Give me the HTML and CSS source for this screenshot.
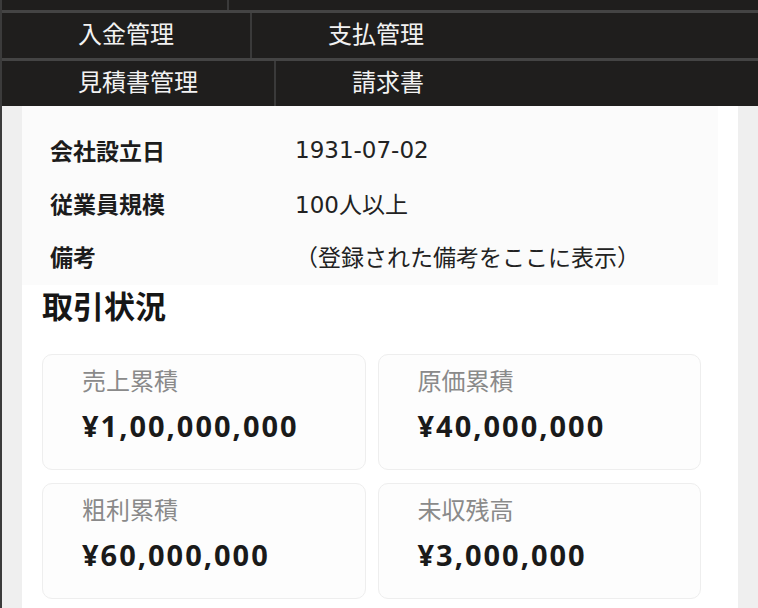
FILE: index.html
```
<!DOCTYPE html>
<html lang="ja">
<head>
<meta charset="utf-8">
<title>取引状況</title>
<link rel="stylesheet" href="styles.css">
</head>
<body>
<div class="app">
  <nav class="topnav">
    <div class="nav-row nav-row-top"><span class="nav-stub"></span></div>
    <div class="nav-row"><a class="nav-cell">入金管理</a><a class="nav-cell">支払管理</a></div>
    <div class="nav-row"><a class="nav-cell">見積書管理</a><a class="nav-cell">請求書</a></div>
  </nav>
  <main class="panel">
    <table class="info">
      <tr class="info-hidden"><th>業種区分</th><td>製造業</td></tr>
      <tr><th>会社設立日</th><td>1931-07-02</td></tr>
      <tr><th>従業員規模</th><td>100人以上</td></tr>
      <tr><th>備考</th><td>（登録された備考をここに表示）</td></tr>
    </table>
    <h2 class="section-title">取引状況</h2>
    <div class="stats">
      <div class="card"><div class="card-label">売上累積</div><div class="card-value">¥1,00,000,000</div></div>
      <div class="card"><div class="card-label">原価累積</div><div class="card-value">¥40,000,000</div></div>
      <div class="card"><div class="card-label">粗利累積</div><div class="card-value">¥60,000,000</div></div>
      <div class="card"><div class="card-label">未収残高</div><div class="card-value">¥3,000,000</div></div>
    </div>
  </main>
</div>
</body>
</html>
```
FILE: styles.css
```
* { box-sizing: border-box; }
html, body { margin: 0; padding: 0; }
body {
  background: #efefef;
  font-family: "DejaVu Sans", "Noto Sans CJK JP", sans-serif;
  color: #1c1c1c;
}
.app {
  border-left: 2px solid #3b3b3b;
  min-height: 100vh;
  padding: 0 20px;
}
.topnav {
  position: fixed;
  top: 0;
  left: 0;
  right: 0;
  background: #1f1e1d;
  border-left: 2px solid #3b3b3b;
  z-index: 10;
}
.nav-row {
  display: flex;
  height: 48px;
  border-top: 3px solid #444444;
}
.nav-row-top {
  height: 10px;
  border-top: none;
}
.nav-stub {
  width: 227px;
  border-right: 2px solid #3a3a3a;
}
.nav-cell {
  display: block;
  padding: 0 76px;
  border-right: 2px solid #3a3a3a;
  font-family: "Noto Sans CJK JP", sans-serif;
  font-size: 24px;
  line-height: 39px;
  color: #f2f2f2;
}
.nav-cell:last-child {
  border-right: none;
}
.panel {
  background: #ffffff;
  padding-top: 73px;
  min-height: 620px;
}
.info {
  width: 696px;
  border-collapse: collapse;
  background: #fbfbfb;
  font-size: 23px;
}
.info th, .info td {
  height: 53px;
  padding: 0 0 6px 0;
  text-align: left;
  vertical-align: middle;
}
.info-hidden th, .info-hidden td {
  padding-bottom: 14px;
}
.info th {
  width: 273px;
  padding-left: 28px;
  font-family: "Noto Sans CJK JP", sans-serif;
  font-weight: 700;
  color: #1c1c1c;
}
.info td {
  font-weight: 400;
  color: #222222;
}
.section-title {
  margin: 0 0 29px 20px;
  font-family: "Noto Sans CJK JP", sans-serif;
  font-size: 31px;
  line-height: 40px;
  font-weight: 700;
  color: #161616;
}
.stats {
  width: 659px;
  margin-left: 20px;
  display: grid;
  grid-template-columns: 1fr 1fr;
  gap: 13px 12px;
}
.card {
  height: 116px;
  border: 1px solid #eeeeee;
  border-radius: 10px;
  background: #fdfdfd;
  padding: 10px 0 0 39px;
}
.card-label {
  font-family: "Noto Sans CJK JP", sans-serif;
  font-size: 24px;
  line-height: 30px;
  color: #8a8a8a;
}
.card-value {
  margin-top: 13px;
  font-family: "Open Sans", "Noto Sans CJK JP", sans-serif;
  font-weight: 700;
  font-size: 29px;
  line-height: 36px;
  letter-spacing: 2px;
  color: #1a1a1a;
}
```
